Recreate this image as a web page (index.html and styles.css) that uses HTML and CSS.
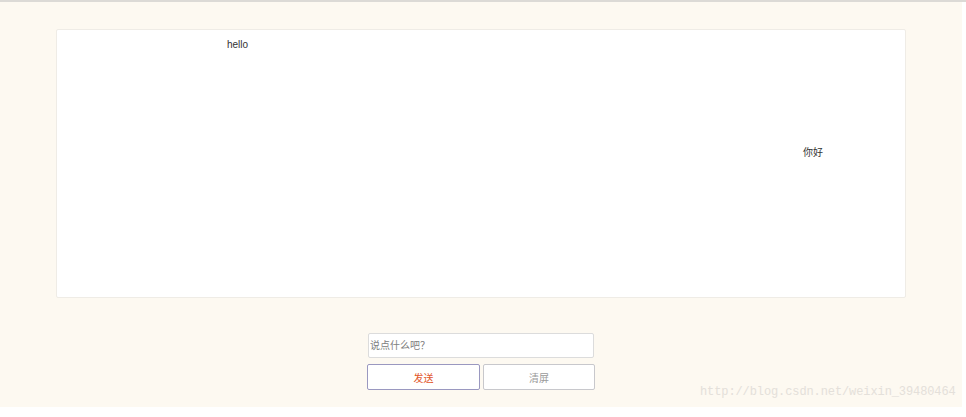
FILE: index.html
```html
<!DOCTYPE html>
<html>
<head>
<meta charset="utf-8">
<link rel="stylesheet" href="styles.css">
</head>
<body>
<div class="topline"></div>
<div class="page">
  <div class="chat">
    <div class="msg msg-left">hello</div>
    <div class="msg msg-right">你好</div>
  </div>
  <div class="form">
    <input class="input" type="text" placeholder="说点什么吧？">
    <div class="buttons">
      <button class="btn btn-send">发送</button>
      <button class="btn btn-clear">清屏</button>
    </div>
  </div>
  <div class="watermark">http://blog.csdn.net/weixin_39480464</div>
</div>
</body>
</html>
```
FILE: styles.css
```css
html, body {
  margin: 0;
  padding: 0;
  background: #ffffff;
  font-family: "Liberation Sans", "Noto Sans CJK SC", sans-serif;
}
.topline {
  height: 2px;
  background: #dcdad6;
}
.page {
  position: relative;
  width: 962px;
  height: 405px;
  background: #fdf9f1;
  padding-top: 27px;
  box-sizing: border-box;
}
.chat {
  margin-left: 56px;
  width: 850px;
  height: 269px;
  box-sizing: border-box;
  background: #ffffff;
  border: 1px solid #efece6;
  border-radius: 2px;
  padding-top: 9px;
}
.msg {
  font-size: 10px;
  line-height: 12px;
  color: #333333;
}
.msg-left {
  margin-left: 170px;
}
.msg-right {
  margin-left: 746px;
  margin-top: 96px;
}
.form {
  margin-left: 367px;
  margin-top: 35px;
  width: 229px;
  display: flex;
  flex-direction: column;
  gap: 6px;
}
.input {
  margin-left: 1px;
  width: 226px;
  height: 25px;
  box-sizing: border-box;
  border: 1px solid #dcdcdc;
  border-radius: 2px;
  background: #ffffff;
  padding: 0 0 0 1px;
  font-family: "Liberation Sans", "Noto Sans CJK SC", sans-serif;
  font-size: 10px;
  outline: none;
}
.input::placeholder {
  color: #808080;
}
.buttons {
  display: flex;
  gap: 3px;
}
.btn {
  width: 113px;
  height: 26px;
  box-sizing: border-box;
  background: #ffffff;
  border-radius: 2px;
  font-family: "Liberation Sans", "Noto Sans CJK SC", sans-serif;
  font-size: 10px;
  padding: 0;
}
.btn-send {
  border: 1px solid #9a98c0;
  color: #e2562a;
}
.btn-clear {
  width: 112px;
  border: 1px solid #c8c8cc;
  color: #9a9a9a;
}
.watermark {
  position: absolute;
  left: 700px;
  top: 383px;
  font-family: "Liberation Mono", monospace;
  font-size: 12px;
  color: #e4e0da;
  letter-spacing: -0.1px;
}
```
